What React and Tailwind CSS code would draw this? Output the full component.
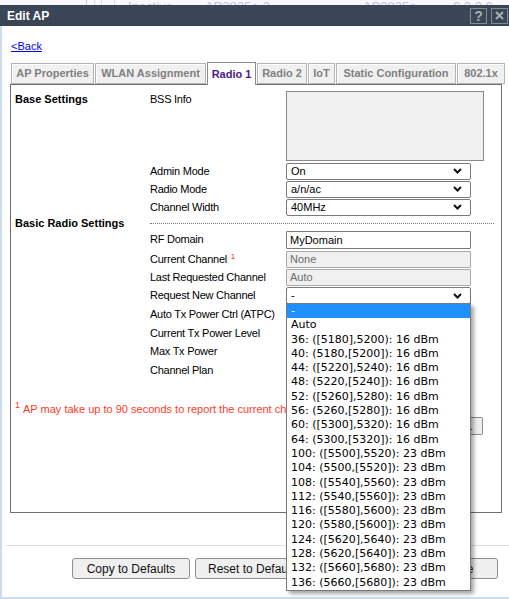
import React from "react";

const F = "font-['Liberation_Sans',Arial,sans-serif]";

function Chevron() {
  return (
    <svg width="9" height="6" viewBox="0 0 9 6" className="absolute right-[8px] top-1/2 -translate-y-1/2">
      <path d="M1 1 L4.5 4.5 L8 1" fill="none" stroke="#111" strokeWidth="2" />
    </svg>
  );
}

function Select({ value, h = "h-[17px]" }) {
  return (
    <div className={`relative w-[185px] ${h} border border-[#7a7a7a] rounded-[2px] bg-white flex items-center pl-[4px] text-[11px] text-black`}>
      {value}
      <Chevron />
    </div>
  );
}

function Input({ value, disabled, h = "h-[17px]" }) {
  return (
    <div
      className={`w-[185px] ${h} border rounded-[1px] flex items-center pl-[3px] text-[11px] ${
        disabled ? "bg-[#f0f0f0] border-[#a9a9a9] text-[#6d6d6d]" : "bg-white border-[#7a7a7a] text-black"
      }`}
    >
      {value}
    </div>
  );
}

const options = [
  "-",
  "Auto",
  "36: ([5180],5200): 16 dBm",
  "40: (5180,[5200]): 16 dBm",
  "44: ([5220],5240): 16 dBm",
  "48: (5220,[5240]): 16 dBm",
  "52: ([5260],5280): 16 dBm",
  "56: (5260,[5280]): 16 dBm",
  "60: ([5300],5320): 16 dBm",
  "64: (5300,[5320]): 16 dBm",
  "100: ([5500],5520): 23 dBm",
  "104: (5500,[5520]): 23 dBm",
  "108: ([5540],5560): 23 dBm",
  "112: (5540,[5560]): 23 dBm",
  "116: ([5580],5600): 23 dBm",
  "120: (5580,[5600]): 23 dBm",
  "124: ([5620],5640): 23 dBm",
  "128: (5620,[5640]): 23 dBm",
  "132: ([5660],5680): 23 dBm",
  "136: (5660,[5680]): 23 dBm",
];

function Dropdown() {
  return (
    <div className="absolute left-0 top-[16px] z-20 w-[185px] border border-[#7a7a7a] bg-white shadow-[3px_3px_4px_rgba(0,0,0,0.35)] font-['DejaVu_Sans',sans-serif] text-[11px] text-black">
      {options.map((o, i) => (
        <div
          key={o}
          className={`h-[14.3px] leading-[14.3px] pl-[4px] whitespace-nowrap ${i === 0 ? "bg-[#1e90ff] text-white" : ""}`}
        >
          {o}
        </div>
      ))}
    </div>
  );
}

function Row({ left, label, children, h }) {
  return (
    <div className={`flex items-center ${h}`}>
      <div className="w-[135px] font-bold text-[11px] text-black">{left}</div>
      <div className="w-[136px] text-[11px] text-black tracking-[-0.25px] whitespace-nowrap">{label}</div>
      <div className="relative">{children}</div>
    </div>
  );
}

const tabs = [
  ["AP Properties", "w-[83px]"],
  ["WLAN Assignment", "w-[111px]"],
  ["Radio 1", "w-[49px]"],
  ["Radio 2", "w-[50px]"],
  ["IoT", "w-[27px]"],
  ["Static Configuration", "w-[120px]"],
  ["802.1x", "w-[48px]"],
];

export default function App() {
  return (
    <div className={`w-[509px] h-[599px] overflow-hidden bg-white ${F}`}>
      {/* background page strip */}
      <div className="h-[5px] overflow-hidden bg-[#f9f8ff] relative">
        <div className="flex items-end h-[5px] text-[#c4bedb] text-[13px] leading-[13px]">
          <div className="w-[86px]" />
          <div className="w-[1px] h-[5px] bg-[#c8c8d0]" />
          <div className="w-[7px]" />
          <div className="w-[1px] h-[5px] bg-[#d8d8e0]" />
          <div className="w-[6px]" />
          <div className="w-[1px] h-[5px] bg-[#d8d8e0]" />
          <div className="w-[12px]" />
          <div className="w-[1px] h-[5px] bg-[#d8d8e0]" />
          <div className="w-[13px]" />
          <div className="w-[77px] mb-[-8px]">Inactive</div>
          <div className="w-[158px] mb-[-8px]">AP3825e-2</div>
          <div className="w-[90px] mb-[-8px]">AP3825e</div>
          <div className="mb-[-8px]">0.0.0.0</div>
        </div>
      </div>

      {/* title bar */}
      <div className="h-[21px] bg-[#3a4556] flex items-center pl-[7px] pr-[1px]">
        <div className="text-white font-bold text-[12px] flex-1">Edit AP</div>
        <div className="w-[17px] h-[16px] border border-[#858b95] flex items-center justify-center text-[#a9adb3] font-bold text-[14px] leading-none mr-[4px]">
          ?
        </div>
        <div className="w-[17px] h-[16px] border border-[#858b95] flex items-center justify-center">
          <svg width="9" height="9" viewBox="0 0 9 9">
            <path d="M1 1 L8 8 M8 1 L1 8" stroke="#a9adb3" strokeWidth="2" />
          </svg>
        </div>
      </div>

      {/* body */}
      <div className="h-[573px] border-l-2 border-b-2 border-[#c9dcf0] flex flex-col">
        <div className="pt-[12px] pl-[9px] h-[27px] leading-[13px]">
          <span className="text-[#0000ee] underline text-[11px] leading-[13px]">&lt;Back</span>
        </div>

        <div className="ml-[8px] mt-[10px]">
          {/* tabs */}
          <div className="flex gap-[1px] ml-[1px] h-[21px] items-end relative z-10">
            {tabs.map(([t, w]) =>
              t === "Radio 1" ? (
                <div
                  key={t}
                  className={`${w} h-[23px] mb-[-1px] bg-white border border-[#8a8a8a] border-b-0 flex items-center justify-center font-bold text-[11px] text-[#4b1a8a] whitespace-nowrap`}
                >
                  {t}
                </div>
              ) : (
                <div
                  key={t}
                  className={`${w} h-[21px] bg-[#f0f0f0] border border-[#b4b4b4] shadow-[inset_1px_1px_0_#fff] flex items-center justify-center font-bold text-[11px] text-[#808080] whitespace-nowrap`}
                >
                  {t}
                </div>
              )
            )}
          </div>

          {/* panel */}
          <div className="w-[492px] h-[429px] border border-[#6e6e6e] pt-[6px] pl-[4px] flex flex-col">
            <Row left="Base Settings" label="BSS Info" h="h-[70px] !items-start">
              <div className="w-[198px] h-[70px] border border-[#8a8a8a] bg-[#f0f0f0]" />
            </Row>
            <div className="h-[1px]" />
            <Row label="Admin Mode" h="h-[18px]">
              <Select value="On" />
            </Row>
            <Row label="Radio Mode" h="h-[18px]">
              <Select value="a/n/ac" />
            </Row>
            <Row label="Channel Width" h="h-[18px]">
              <Select value="40MHz" />
            </Row>

            <div className="flex items-center h-[14px]">
              <div className="w-[135px] font-bold text-[11px] text-black whitespace-nowrap">Basic Radio Settings</div>
              <div className="w-[344px] border-t border-dotted border-[#777]" />
            </div>

            <div className="h-[1px]" />
            <Row label="RF Domain" h="h-[20px] !items-start">
              <Input value="MyDomain" h="h-[18px]" />
            </Row>
            <Row
              label={
                <span>
                  Current Channel <span className="relative top-[-4px] text-[#ff2020] text-[8px] ml-[1px]">1</span>
                </span>
              }
              h="h-[18px] !items-start"
            >
              <Input value="None" disabled />
            </Row>
            <Row label="Last Requested Channel" h="h-[18px] !items-start">
              <Input value="Auto" disabled />
            </Row>
            <Row label="Request New Channel" h="h-[18px] !items-start">
              <Select value="-" />
              <Dropdown />
            </Row>
            <Row label="Auto Tx Power Ctrl (ATPC)" h="h-[18.5px]">
              <div className="w-[13px] h-[13px] border border-[#7a7a7a] bg-white" />
            </Row>
            <Row label="Current Tx Power Level" h="h-[18.5px]">
              <span className="text-[11px]">16 dBm</span>
            </Row>
            <Row label="Max Tx Power" h="h-[18.5px]">
              <Select value="23 dBm" />
            </Row>
            <Row label="Channel Plan" h="h-[18.5px]">
              <Select value="All channels" />
            </Row>

            <div className="mt-[22px] flex items-end text-[11px] leading-[13px] text-[#ff3b1f] h-[15px] whitespace-nowrap overflow-hidden">
              <span className="text-[9px] leading-[9px] self-start mr-[3px]">1</span>
              <span>AP may take up to 90 seconds to report the current channel.</span>
            </div>
            <div className="mt-[1px] flex justify-end pr-[18px]">
              <div className="h-[18px] px-[9px] border border-[#8a8a8a] rounded-[2px] bg-[#eeeeee] flex items-center text-[11px] text-black">
                Refresh...
              </div>
            </div>
          </div>
        </div>

        {/* separator */}
        <div className="mt-[32px] ml-[4px] h-[1px] bg-[#dcdcdc]" />

        {/* bottom buttons */}
        <div className="mt-[12px] flex gap-[5px] pl-[70px]">
          <button className="w-[118px] h-[21px] border border-[#8f8f8f] rounded-[3px] bg-[#efefef] text-[12px] text-[#111]">
            Copy to Defaults
          </button>
          <button className="w-[118px] h-[21px] border border-[#8f8f8f] rounded-[3px] bg-[#efefef] text-[12px] text-[#111]">
            Reset to Defaults
          </button>
          <button className="w-[118px] h-[21px] border border-[#8f8f8f] rounded-[3px] bg-[#efefef] text-[12px] text-[#111]">
            Apply
          </button>
          <button className="w-[57px] h-[21px] border border-[#8f8f8f] rounded-[3px] bg-[#efefef] text-[12px] text-[#111] pl-[4px] text-left">
            Save
          </button>
        </div>
      </div>
    </div>
  );
}
